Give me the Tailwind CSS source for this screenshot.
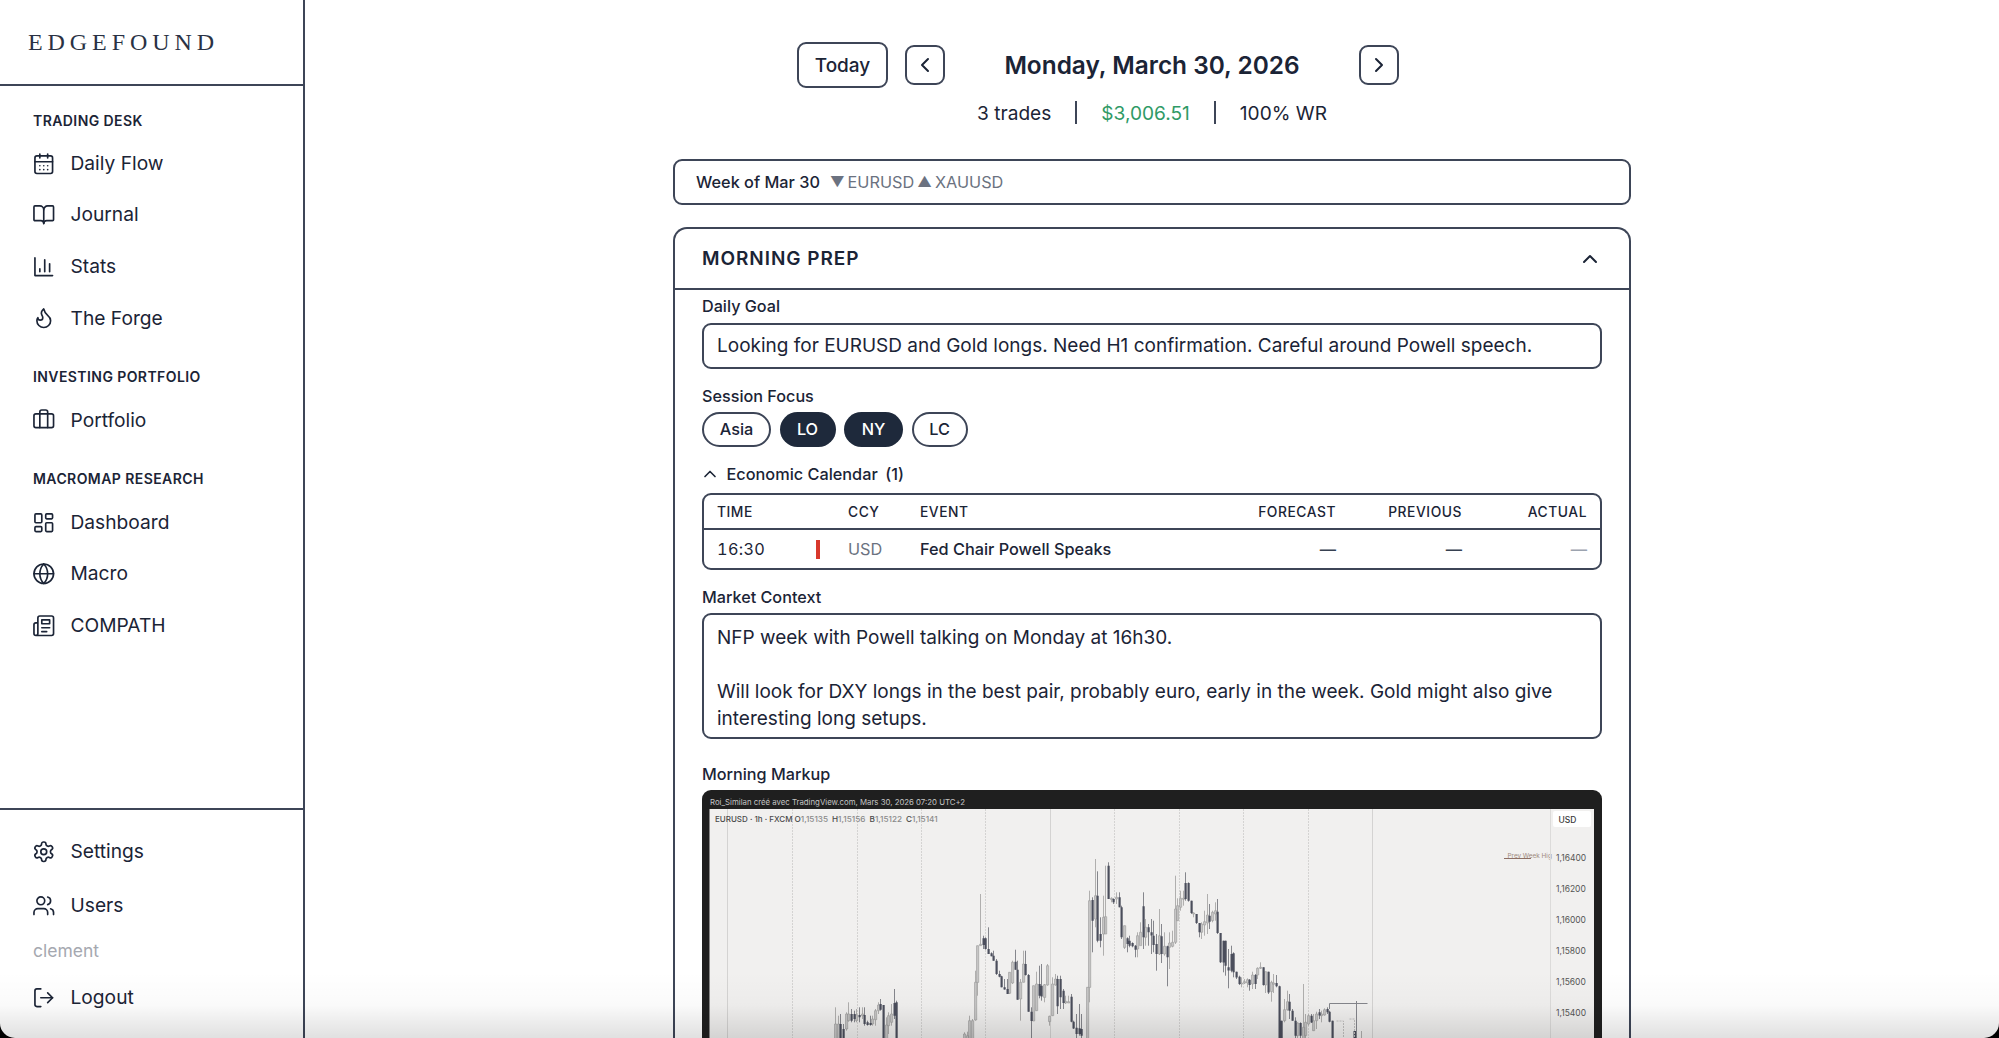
<!DOCTYPE html>
<html lang="en">
<head>
    <meta charset="UTF-8">
    <title>Edgefound - Daily Flow</title>
    <script src="https://cdn.jsdelivr.net/npm/@tailwindcss/browser@4"></script>
</head>
<body class="bg-black font-['Inter',sans-serif] text-[#1b2436]">
    <div class="relative flex h-[1038px] w-[1999px] overflow-hidden rounded-b-[15px] bg-white">

        <!-- Sidebar -->
        <aside class="flex h-full w-[305px] shrink-0 flex-col border-r-2 border-[#3d4557]">
            <div class="flex h-[86px] shrink-0 items-center border-b-2 border-[#3d4557] pl-[28px]">
                <span class="font-['Liberation_Serif',serif] text-[24px] leading-none tracking-[0.205em] text-[#2a3244]">EDGEFOUND</span>
            </div>

            <nav class="flex-1 pl-[33px] pt-[24.5px]">
                <h3 class="mb-[7px] h-[20px] text-[14px] font-semibold leading-[20px] tracking-[0.03em]">TRADING DESK</h3>
                <a class="-ml-[1.5px] flex h-[51.6px] items-center gap-[15.5px] text-[19.2px]">
                    <svg class="h-[23.5px] w-[23.5px]" viewBox="0 0 24 24" fill="none" stroke="currentColor" stroke-width="1.7" stroke-linecap="round" stroke-linejoin="round"><path d="M8 2v4"/><path d="M16 2v4"/><rect width="18" height="18" x="3" y="4" rx="2"/><path d="M3 10h18"/><path d="M8 14h.01"/><path d="M12 14h.01"/><path d="M16 14h.01"/><path d="M8 18h.01"/><path d="M12 18h.01"/><path d="M16 18h.01"/></svg>
                    Daily Flow
                </a>
                <a class="-ml-[1.5px] flex h-[51.6px] items-center gap-[15.5px] text-[19.2px]">
                    <svg class="h-[23.5px] w-[23.5px]" viewBox="0 0 24 24" fill="none" stroke="currentColor" stroke-width="1.7" stroke-linecap="round" stroke-linejoin="round"><path d="M12 7v14"/><path d="M3 18a1 1 0 0 1-1-1V4a1 1 0 0 1 1-1h5a4 4 0 0 1 4 4 4 4 0 0 1 4-4h5a1 1 0 0 1 1 1v13a1 1 0 0 1-1 1h-6a3 3 0 0 0-3 3 3 3 0 0 0-3-3z"/></svg>
                    Journal
                </a>
                <a class="-ml-[1.5px] flex h-[51.6px] items-center gap-[15.5px] text-[19.2px]">
                    <svg class="h-[23.5px] w-[23.5px]" viewBox="0 0 24 24" fill="none" stroke="currentColor" stroke-width="1.7" stroke-linecap="round" stroke-linejoin="round"><path d="M3 3v18h18"/><path d="M18 17V9"/><path d="M13 17V5"/><path d="M8 17v-3"/></svg>
                    Stats
                </a>
                <a class="-ml-[1.5px] flex h-[51.6px] items-center gap-[15.5px] text-[19.2px]">
                    <svg class="h-[23.5px] w-[23.5px]" viewBox="0 0 24 24" fill="none" stroke="currentColor" stroke-width="1.7" stroke-linecap="round" stroke-linejoin="round"><path d="M8.5 14.5A2.5 2.5 0 0 0 11 12c0-1.38-.5-2-1-3-1.072-2.143-.224-4.054 2-6 .5 2.5 2 4.9 4 6.5 2 1.6 3 3.5 3 5.5a7 7 0 1 1-14 0c0-1.153.433-2.294 1-3a2.5 2.5 0 0 0 2.5 2.5z"/></svg>
                    The Forge
                </a>

                <h3 class="mb-[7px] mt-[23.5px] h-[20px] text-[14px] font-semibold leading-[20px] tracking-[0.03em]">INVESTING PORTFOLIO</h3>
                <a class="-ml-[1.5px] flex h-[51.6px] items-center gap-[15.5px] text-[19.2px]">
                    <svg class="h-[23.5px] w-[23.5px]" viewBox="0 0 24 24" fill="none" stroke="currentColor" stroke-width="1.7" stroke-linecap="round" stroke-linejoin="round"><path d="M16 20V4a2 2 0 0 0-2-2h-4a2 2 0 0 0-2 2v16"/><rect width="20" height="14" x="2" y="6" rx="2"/></svg>
                    Portfolio
                </a>

                <h3 class="mb-[7px] mt-[23.5px] h-[20px] text-[14px] font-semibold leading-[20px] tracking-[0.03em]">MACROMAP RESEARCH</h3>
                <a class="-ml-[1.5px] flex h-[51.6px] items-center gap-[15.5px] text-[19.2px]">
                    <svg class="h-[23.5px] w-[23.5px]" viewBox="0 0 24 24" fill="none" stroke="currentColor" stroke-width="1.7" stroke-linecap="round" stroke-linejoin="round"><rect width="7" height="9" x="3" y="3" rx="1"/><rect width="7" height="5" x="14" y="3" rx="1"/><rect width="7" height="9" x="14" y="12" rx="1"/><rect width="7" height="5" x="3" y="16" rx="1"/></svg>
                    Dashboard
                </a>
                <a class="-ml-[1.5px] flex h-[51.6px] items-center gap-[15.5px] text-[19.2px]">
                    <svg class="h-[23.5px] w-[23.5px]" viewBox="0 0 24 24" fill="none" stroke="currentColor" stroke-width="1.7" stroke-linecap="round" stroke-linejoin="round"><circle cx="12" cy="12" r="10"/><path d="M12 2a14.5 14.5 0 0 0 0 20 14.5 14.5 0 0 0 0-20"/><path d="M2 12h20"/></svg>
                    Macro
                </a>
                <a class="-ml-[1.5px] flex h-[51.6px] items-center gap-[15.5px] text-[19.2px]">
                    <svg class="h-[23.5px] w-[23.5px]" viewBox="0 0 24 24" fill="none" stroke="currentColor" stroke-width="1.7" stroke-linecap="round" stroke-linejoin="round"><path d="M4 22h16a2 2 0 0 0 2-2V4a2 2 0 0 0-2-2H8a2 2 0 0 0-2 2v16a2 2 0 0 1-2 2Zm0 0a2 2 0 0 1-2-2v-9c0-1.1.9-2 2-2h2"/><path d="M18 14h-8"/><path d="M15 18h-5"/><path d="M10 6h8v4h-8V6Z"/></svg>
                    COMPATH
                </a>
            </nav>

            <div class="h-[230px] shrink-0 border-t-2 border-[#3d4557] pl-[33px] pt-[14.5px]">
                <a class="-ml-[1.5px] flex h-[54px] items-center gap-[15.5px] text-[19.2px]">
                    <svg class="h-[23.5px] w-[23.5px]" viewBox="0 0 24 24" fill="none" stroke="currentColor" stroke-width="1.7" stroke-linecap="round" stroke-linejoin="round"><path d="M12.22 2h-.44a2 2 0 0 0-2 2v.18a2 2 0 0 1-1 1.73l-.43.25a2 2 0 0 1-2 0l-.15-.08a2 2 0 0 0-2.73.73l-.22.38a2 2 0 0 0 .73 2.73l.15.1a2 2 0 0 1 1 1.72v.51a2 2 0 0 1-1 1.74l-.15.09a2 2 0 0 0-.73 2.73l.22.38a2 2 0 0 0 2.73.73l.15-.08a2 2 0 0 1 2 0l.43.25a2 2 0 0 1 1 1.73V20a2 2 0 0 0 2 2h.44a2 2 0 0 0 2-2v-.18a2 2 0 0 1 1-1.73l.43-.25a2 2 0 0 1 2 0l.15.08a2 2 0 0 0 2.73-.73l.22-.39a2 2 0 0 0-.73-2.73l-.15-.08a2 2 0 0 1-1-1.74v-.5a2 2 0 0 1 1-1.74l.15-.09a2 2 0 0 0 .73-2.73l-.22-.38a2 2 0 0 0-2.73-.73l-.15.08a2 2 0 0 1-2 0l-.43-.25a2 2 0 0 1-1-1.73V4a2 2 0 0 0-2-2z"/><circle cx="12" cy="12" r="3"/></svg>
                    Settings
                </a>
                <a class="-ml-[1.5px] flex h-[54px] items-center gap-[15.5px] text-[19.2px]">
                    <svg class="h-[23.5px] w-[23.5px]" viewBox="0 0 24 24" fill="none" stroke="currentColor" stroke-width="1.7" stroke-linecap="round" stroke-linejoin="round"><path d="M16 21v-2a4 4 0 0 0-4-4H6a4 4 0 0 0-4 4v2"/><circle cx="9" cy="7" r="4"/><path d="M22 21v-2a4 4 0 0 0-3-3.87"/><path d="M16 3.13a4 4 0 0 1 0 7.75"/></svg>
                    Users
                </a>
                <p class="mb-[0.5px] flex h-[37.5px] items-center text-[17.5px] text-[#a5a8b0]">clement</p>
                <a class="-ml-[1.5px] flex h-[54px] items-center gap-[15.5px] text-[19.2px]">
                    <svg class="h-[23.5px] w-[23.5px]" viewBox="0 0 24 24" fill="none" stroke="currentColor" stroke-width="1.7" stroke-linecap="round" stroke-linejoin="round"><path d="M9 21H5a2 2 0 0 1-2-2V5a2 2 0 0 1 2-2h4"/><polyline points="16 17 21 12 16 7"/><line x1="21" x2="9" y1="12" y2="12"/></svg>
                    Logout
                </a>
            </div>
        </aside>

        <!-- Main -->
        <main class="min-w-0 flex-1 pt-[42px]">
            <div class="grid grid-cols-[1fr_auto_1fr] items-center">
                <button class="mr-[17px] h-[46px] w-[91px] justify-self-end rounded-[9px] border-2 border-[#3d4557] pt-[2px] text-[19px] font-medium">Today</button>
                <div class="flex items-center">
                    <button class="flex h-[40px] w-[40px] items-center justify-center rounded-[9px] border-2 border-[#3d4557]">
                        <svg class="h-[24px] w-[24px]" viewBox="0 0 24 24" fill="none" stroke="currentColor" stroke-width="2" stroke-linecap="round" stroke-linejoin="round"><path d="m15 18-6-6 6-6"/></svg>
                    </button>
                    <h1 class="w-[414px] pt-[1px] text-center text-[24.4px] font-semibold">Monday, March 30, 2026</h1>
                    <button class="flex h-[40px] w-[40px] items-center justify-center rounded-[9px] border-2 border-[#3d4557]">
                        <svg class="h-[24px] w-[24px]" viewBox="0 0 24 24" fill="none" stroke="currentColor" stroke-width="2" stroke-linecap="round" stroke-linejoin="round"><path d="m9 18 6-6-6-6"/></svg>
                    </button>
                </div>
                <div></div>
            </div>

            <div class="mt-[13px] flex h-[23px] items-center justify-center text-[19.1px] leading-[26px]">
                <span>3 trades</span>
                <span class="mx-[24px] h-[23px] w-[2px] bg-[#3d4557]"></span>
                <span class="text-[#2f9a66]">$3,006.51</span>
                <span class="mx-[24px] h-[23px] w-[2px] bg-[#3d4557]"></span>
                <span>100% WR</span>
            </div>

            <div class="mx-auto mt-[35px] w-[958px]">
                <div class="flex h-[46px] items-center rounded-[9px] border-2 border-[#3d4557] pl-[21px] text-[16.3px]">
                    <span class="font-medium">Week of Mar 30</span>
                    <span class="ml-[10px] flex items-center gap-[3px] text-[#6b7280]">
                        <span class="text-[14.5px] leading-none">▼</span>
                        <span>EURUSD</span>
                        <span class="text-[14.5px] leading-none">▲</span>
                        <span>XAUUSD</span>
                    </span>
                </div>

                <section class="mt-[22px] rounded-t-[14px] border-2 border-b-0 border-[#3d4557]">
                    <div class="flex h-[61px] items-center justify-between border-b-2 border-[#3d4557] pl-[27px] pr-[27px]">
                        <h2 class="pt-[1px] text-[19px] font-semibold tracking-[0.05em]">MORNING PREP</h2>
                        <svg class="h-[24px] w-[24px]" viewBox="0 0 24 24" fill="none" stroke="currentColor" stroke-width="2" stroke-linecap="round" stroke-linejoin="round"><path d="m18 15-6-6-6 6"/></svg>
                    </div>

                    <div class="px-[27px] pt-[4.5px]">
                        <label class="block h-[22px] text-[16.2px] font-medium leading-[22px]">Daily Goal</label>
                        <div class="mt-[6.5px] flex h-[46px] items-center rounded-[9px] border-2 border-[#3d4557] pl-[13px] text-[19px]">Looking for EURUSD and Gold longs. Need H1 confirmation. Careful around Powell speech.</div>

                        <label class="mt-[15.5px] block h-[22px] text-[16.2px] font-medium leading-[22px]">Session Focus</label>
                        <div class="mt-[5.5px] flex gap-[8.5px] text-[16.3px] font-medium">
                            <button class="h-[35px] w-[69px] rounded-full border-2 border-[#3d4557]">Asia</button>
                            <button class="h-[35px] w-[56px] rounded-full bg-[#1e293b] text-white">LO</button>
                            <button class="h-[35px] w-[59px] rounded-full bg-[#1e293b] text-white">NY</button>
                            <button class="h-[35px] w-[56px] rounded-full border-2 border-[#3d4557]">LC</button>
                        </div>

                        <div class="mt-[16px] flex h-[22px] items-center text-[16.3px] font-medium leading-[22px]">
                            <svg class="-ml-[2px] mr-[6.5px] h-[20px] w-[20px]" viewBox="0 0 24 24" fill="none" stroke="currentColor" stroke-width="2" stroke-linecap="round" stroke-linejoin="round"><path d="m18 15-6-6-6 6"/></svg>
                            <span>Economic Calendar</span>
                            <span class="ml-[7.5px]">(1)</span>
                        </div>

                        <div class="mt-[8px] h-[77px] overflow-hidden rounded-[9px] border-2 border-[#3d4557]">
                            <div class="grid h-[35px] grid-cols-[131px_72px_1fr_130px_126px_125px] items-center border-b-2 border-[#3d4557] px-[13px] pt-[1px] text-[13.8px] font-medium tracking-[0.04em]">
                                <span>TIME</span>
                                <span>CCY</span>
                                <span>EVENT</span>
                                <span class="text-right">FORECAST</span>
                                <span class="text-right">PREVIOUS</span>
                                <span class="text-right">ACTUAL</span>
                            </div>
                            <div class="grid h-[38px] grid-cols-[131px_72px_1fr_130px_126px_125px] items-center px-[13px] text-[16.3px]">
                                <span class="relative tabular-nums tracking-[0.02em]">16:30<i class="absolute left-[99px] top-[3px] h-[19px] w-[4px] bg-[#d8382c]"></i></span>
                                <span class="text-[#6b7280]">USD</span>
                                <span class="font-medium">Fed Chair Powell Speaks</span>
                                <span class="text-right font-medium text-[#374151]">—</span>
                                <span class="text-right font-medium text-[#374151]">—</span>
                                <span class="text-right font-medium text-[#9ca3af]">—</span>
                            </div>
                        </div>

                        <label class="mt-[16px] block h-[22px] text-[16.2px] font-medium leading-[22px]">Market Context</label>
                        <div class="mt-[5px] h-[126px] rounded-[9px] border-2 border-[#3d4557] px-[13px] py-[9px] text-[19px] leading-[27px]">
                            <p>NFP week with Powell talking on Monday at 16h30.</p>
                            <p class="mt-[27px]">Will look for DXY longs in the best pair, probably euro, early in the week. Gold might also give interesting long setups.</p>
                        </div>

                        <label class="mt-[24px] block h-[22px] text-[16.2px] font-medium leading-[22px]">Morning Markup</label>
                        <div class="mt-[5px] h-[300px] overflow-hidden rounded-t-[9px] bg-[#1f1f1f]">
                            <svg class="block" width="900" height="300" viewBox="702 791 900 300" font-family="Inter, sans-serif">
                                <text x="710" y="805.5" font-size="7.8" fill="#c4c4c4">Roi_Similan créé avec TradingView.com, Mars 30, 2026 07:20 UTC+2</text>
                                <rect x="709.5" y="810" width="884.5" height="290" fill="#f1f0ef"/>
                                <g stroke="#d4d3d2" stroke-width="1" stroke-dasharray="2 1">
                                    <path d="M792.5 810V1091M857.5 810V1091M921.5 810V1091M985.5 810V1091M1114.5 810V1091M1179.5 810V1091M1243.5 810V1091M1308.5 810V1091"/>
                                    <path stroke-dasharray="none" d="M727.5 810V1091M1050.5 810V1091M1372.5 810V1091"/>
                                </g>
                                <path id="wicksLight" fill="none" stroke="#b0afae" stroke-width="1"/>
                                <path id="wicksDark" fill="none" stroke="#85868c" stroke-width="1"/>
                                <path id="bodiesLight" fill="#c6c5c5" stroke="#9b9b9b" stroke-width="0.6"/>
                                <path id="bodiesDark" fill="#4b4e5c"/>
                                <path d="M1329.5 1010V1004.5H1367.5M1356.5 1002V1040" fill="none" stroke="#85868c" stroke-width="1"/>
                                <path d="M1336.5 1022H1343.5V1040M1349.5 1020H1354.5V1040" fill="none" stroke="#c0bfbe" stroke-width="1" stroke-dasharray="2 1"/>
                                <text x="715" y="822.5" font-size="8" font-weight="500" fill="#4a4a4a">EURUSD · 1h · FXCM</text>
                                <text x="794.5" y="822.5" font-size="8.2" font-weight="500" fill="#4a4a4a">O<tspan fill="#8a8a8a">1,15135</tspan></text>
                                <text x="832" y="822.5" font-size="8.2" font-weight="500" fill="#4a4a4a">H<tspan fill="#8a8a8a">1,15156</tspan></text>
                                <text x="869.5" y="822.5" font-size="8.2" font-weight="500" fill="#4a4a4a">B<tspan fill="#8a8a8a">1,15122</tspan></text>
                                <text x="906" y="822.5" font-size="8.2" font-weight="500" fill="#4a4a4a">C<tspan fill="#8a8a8a">1,15141</tspan></text>
                                <text x="1507.5" y="858.5" font-size="6.4" fill="#a08a80">Prev Week Hig</text>
                                <path d="M1504 859.5H1531" stroke="#8d6f64" stroke-width="1"/>
                                <path d="M1550.5 810V1091" stroke="#dcdbda" stroke-width="1"/>
                                <rect x="1553" y="812" width="38" height="16" rx="2" fill="#fff"/>
                                <text x="1558.5" y="823.5" font-size="8.5" font-weight="500" fill="#3a3a3a">USD</text>
                                <g font-size="8.5" fill="#555">
                                    <text x="1556" y="861.5">1,16400</text>
                                    <text x="1556" y="892.5">1,16200</text>
                                    <text x="1556" y="923.5">1,16000</text>
                                    <text x="1556" y="954.5">1,15800</text>
                                    <text x="1556" y="985.5">1,15600</text>
                                    <text x="1556" y="1016.5">1,15400</text>
                                </g>
                            </svg>
                        </div>
                    </div>
                </section>
            </div>
        </main>

        <!-- Window shadow at the bottom edge -->
        <div class="pointer-events-none absolute inset-x-0 bottom-0 h-[66px] bg-linear-to-b from-transparent via-black/2 to-black/12"></div>
    </div>

    <script>
        // candles traced from the chart: [high, low, bodyTop, bodyBottom, dark]
        const L = 0, D = 1;
        const groups = [
            { x0: 680, y0: 760, start: 465, candles: [
                [745,900,795,900,L],[770,900,795,900,L],[765,900,795,900,D],[795,900,810,900,D],[760,815,765,810,L],
                [730,788,765,785,L],[750,790,765,785,D],[755,790,765,780,D],[750,790,768,785,L],[745,790,768,775,D],
                [745,780,765,770,L],[745,800,768,795,D],[785,800,790,798,D],[770,800,792,798,D],[770,800,780,795,L],
                [750,800,755,782,L],[730,765,738,755,L],[720,755,735,752,D],[738,900,738,900,D],[775,900,798,900,L],
                [760,825,770,800,L],[735,800,765,790,L],[690,780,732,770,D],[725,900,730,900,D]
            ]},
            { x0: 900, y0: 840, start: 192, candles: [
                [580,620,585,620,L],[578,620,590,620,L],[530,620,545,620,L],[540,620,545,620,L],[395,545,430,543,L],
                [320,470,320,430,L],[165,320,316,320,L],[290,330,298,318,D],[295,332,298,330,D],[265,345,330,345,D],
                [340,352,343,352,D],[335,365,350,365,D],[360,408,365,405,D],[395,415,405,413,D],[410,445,412,445,D],
                [420,452,445,452,D],[420,465,450,465,D],[400,465,400,463,L],[365,435,370,432,L],[332,392,368,392,D],
                [365,482,392,482,D],[420,545,430,480,L],[335,430,375,430,L],[335,410,375,408,D],[405,518,408,518,D],
                [505,620,518,546,D],[440,546,440,546,L],[398,515,435,515,L],[380,478,435,470,D],[375,485,440,472,D],
                [435,490,437,475,L],[375,440,380,438,L],[530,560,532,548,L],[415,530,435,530,L],[405,440,420,438,L],
                [410,525,420,502,D],[410,510,420,475,D],[450,510,455,492,D],[470,495,487,492,L],[470,492,488,492,L],
                [465,550,473,548,D],[545,570,548,568,D],[525,620,566,585,D],[495,590,568,585,D],[525,620,570,590,D],
                [600,620,605,620,D],[445,620,445,620,L],[155,490,185,445,L],[175,340,183,245,D],[60,265,170,240,L],
                [97,310,170,305,D],[235,325,285,305,D],[170,350,235,285,L],[80,280,233,285,L],[70,180,80,180,D],
                [175,190,178,182,L],[178,195,180,190,D],[160,195,175,180,L],[160,205,175,205,D],[200,300,205,295,D],
                [260,330,260,325,L],[295,340,298,315,D],[290,325,305,320,D],[310,325,312,322,D],[318,355,320,332,D]
            ]},
            { x0: 1130, y0: 840, start: 22, candles: [
                [280,355,290,330,L],[250,300,280,320,L],[160,330,202,295,D],[240,320,265,295,L],[255,320,265,280,D],
                [240,345,280,290,D],[245,340,290,318,D],[285,395,315,345,D],[210,348,290,345,L],[255,372,292,345,D],
                [280,350,322,345,L],[320,442,322,355,D],[280,390,312,325,L],[275,325,310,322,L],[110,315,210,310,L],
                [178,245,200,245,L],[155,215,178,205,L],[155,200,178,180,L],[100,185,132,180,D],[130,188,132,185,D],
                [185,225,185,222,D],[220,235,222,225,L],[225,255,225,252,D],[252,295,252,280,D],[250,300,255,280,L],
                [215,290,248,258,L],[165,285,228,252,L],[195,270,230,248,D],[215,250,220,245,L],[190,245,215,225,L],
                [180,285,218,282,D],[282,372,282,370,D],[305,400,305,370,D],[305,410,305,380,D],[330,448,385,395,D],
                [320,400,345,395,D],[340,415,343,400,D],[398,420,398,415,D],[410,438,413,435,D],[415,445,432,435,L],
                [420,435,428,432,L],[418,445,422,432,L],[420,455,422,438,D],[398,450,408,435,L],[405,450,408,435,D],
                [385,420,388,408,L],[370,390,385,388,L],[385,440,385,438,D],[398,462,398,438,L],[398,465,398,460,D],
                [425,488,430,458,L],[405,462,432,436,L],[408,445,432,442,D],[440,620,442,620,D],[545,620,545,620,D],
                [480,550,512,545,L],[455,515,488,512,L],[465,540,488,515,D],[510,545,515,545,D],[535,620,545,590,D],
                [550,620,552,590,L],[550,620,552,590,D],[435,620,565,620,L],[525,620,550,590,L],[525,560,530,555,L],
                [525,552,530,550,D],[525,575,545,575,L],[518,570,525,545,L],[510,540,520,530,D],[515,550,525,530,L],
                [508,530,512,528,L],[505,525,510,520,D],[515,550,518,548,D],[545,620,545,620,D]
            ]}
        ];

        const paths = { wicksLight: "", wicksDark: "", bodiesLight: "", bodiesDark: "" };
        groups.forEach(group => {
            group.candles.forEach((candle, i) => {
                const [high, low, top, bottom, dark] = candle;
                const x = Math.round(group.x0 + (group.start + i * 8) / 3) + 0.5;
                const y = v => (group.y0 + v / 3).toFixed(1);
                const h = Math.max(bottom - top, 3) / 3;
                paths[dark ? "wicksDark" : "wicksLight"] += `M${x} ${y(high)}V${y(low)}`;
                paths[dark ? "bodiesDark" : "bodiesLight"] += `M${x - 1} ${y(top)}h2.2v${h.toFixed(1)}h-2.2z`;
            });
        });
        // the last few candles by the drawn range
        paths.bodiesDark += "M1353.5 1032h3.5v8h-3.5z";
        paths.wicksLight += "M1361.5 1032V1040";

        Object.keys(paths).forEach(id => document.getElementById(id).setAttribute("d", paths[id]));
    </script>
</body>
</html>
